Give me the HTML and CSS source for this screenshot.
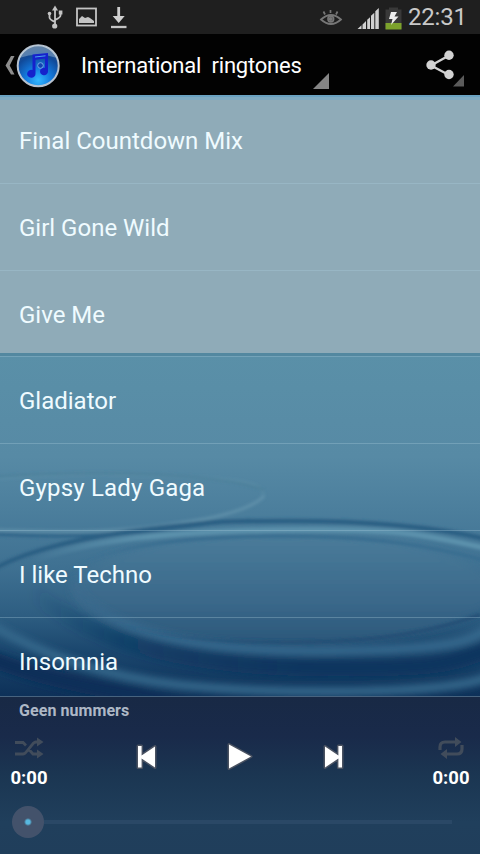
FILE: index.html
```html
<!DOCTYPE html>
<html lang="nl">
<head>
<meta charset="utf-8">
<title>International ringtones</title>
<link rel="stylesheet" href="styles.css">
</head>
<body>
<div class="phone">
  <header class="status">
    <svg class="status-left" width="90" height="34" viewBox="45 0 90 34" fill="none" stroke="#c4c4c4" stroke-width="1.8">
      <path d="M55 8v17M49.500 13v4.500q0 2 5.500 4.500M60.500 12v3.500q0 2-5.500 4.500"/>
      <path d="M52 10.500l3-5 3 5z" fill="#c4c4c4" stroke="none"/>
      <circle cx="49.500" cy="13.500" r="1.800" fill="#c4c4c4" stroke="none"/>
      <path d="M58.800 10.500h3.600v4h-3.600z" fill="#c4c4c4" stroke="none"/>
      <circle cx="54.700" cy="26" r="2.600" fill="#c4c4c4" stroke="none"/>
      <rect x="77" y="8.500" width="19" height="17"/>
      <path d="M79 23v-4l3-3 3 2 3-1 2 1 4 3v2z" fill="#c4c4c4" stroke="none"/>
      <path d="M117.300 7h2.800v9h4.600l-6 7-6-7h4.600z" fill="#d0d0d0" stroke="none"/>
      <path d="M111 27h15.500" stroke-width="2.300"/>
    </svg>
    <svg class="status-right" width="88" height="34" viewBox="317 0 88 34">
      <g fill="none" stroke="#777" stroke-width="1.700">
        <path d="M321 19.500q10-9 20 0q-10 9-20 0zM330.500 13v-3M325 14.500l-1.500-3M336 14.500l1.500-3"/>
        <circle cx="330.800" cy="19" r="2.800"/>
        <circle cx="330.800" cy="19" r="1.200" fill="#858585"/>
      </g>
      <g fill="#d0d0d0">
        <path d="M357.500 29l4-3.700V29zM362.500 29v-4.600l3.500-3.400v8zM367.200 29v-9.200l2.800-2.600V29zM371 29V15.800l3.300-3.100V29zM375.300 29V11.200l3.500-3.200v21z"/>
      </g>
      <path d="M385.500 9.500h3.500V7.500h9v2h3.500V29h-16z" fill="#393939"/>
      <path d="M385.500 23h16v6.500h-16z" fill="#7ca22c"/>
      <path d="M391 12h6l-2.500 4.500h4L391 25l1.500-6H389z" fill="#eee"/>
    </svg>
    <span class="clock">22:31</span>
  </header>
  <div class="bar">
    <svg class="logo" width="64" height="50" viewBox="0 40 64 50">
      <defs><radialGradient id="orb" cx=".5" cy=".85" r=".85"><stop offset="0" stop-color="#33b8ff"/><stop offset=".35" stop-color="#147ce0"/><stop offset=".72" stop-color="#104a9a"/><stop offset="1" stop-color="#30527c"/></radialGradient></defs>
      <path d="M14.500 56H11L5.500 65.500l5.500 9h3.500L9.700 65.500z" fill="#8d8d8d"/>
      <circle cx="38.200" cy="65.800" r="20.500" fill="url(#orb)" stroke="#b7c2cf" stroke-width="2"/>
      <path d="M19 58a20.500 20.500 0 0 1 38 0q-19-7-38 0z" fill="#c2dbe9" opacity=".36"/>
      <path d="M32.500 54.500l15.500-1.500v18.500a4 3.800 0 1 1-3-3.700V58.500l-9.500 1.200v13.800a4.200 4 0 1 1-3-3.500z" fill="#1522cc"/>
      <path d="M35 57l10.500-1.200" stroke="#49a4f1" stroke-width="1"/>
      <circle cx="40.500" cy="65.500" r="2.800" fill="#1445b1" stroke="#75a9ea" stroke-width="1"/>
    </svg>
    <div class="title">International&nbsp; ringtones</div>
    <svg class="corner" width="16" height="16" viewBox="0 0 16 16"><path d="M16 0v16H0z" fill="#858585"/></svg>
    <svg class="share" width="42" height="40" viewBox="424 48 42 40">
      <path d="M449 55.500L431 65.500l18 9.500" fill="none" stroke="#d2d2d2" stroke-width="2.300"/>
      <g fill="#d2d2d2"><circle cx="449" cy="55.300" r="4.700"/><circle cx="431" cy="65" r="4.700"/><circle cx="449" cy="74.500" r="4.700"/></g>
      <path d="M464 75v11.500h-11z" fill="#5b5b5b"/>
    </svg>
  </div>
  <main class="list">
    <svg class="water" width="480" height="602" viewBox="0 95 480 602" preserveAspectRatio="none">
      <defs>
        <linearGradient id="sea" x1="0" y1="353" x2="0" y2="697" gradientUnits="userSpaceOnUse">
          <stop offset="0" stop-color="#5a90a8"/><stop offset=".3" stop-color="#578aa5"/><stop offset=".45" stop-color="#4c7f9d"/><stop offset=".62" stop-color="#3f7192"/><stop offset=".76" stop-color="#2e5e82"/><stop offset=".87" stop-color="#1a466d"/><stop offset="1" stop-color="#0d3058"/>
        </linearGradient>
        <linearGradient id="disc" x1="0" y1="530" x2="0" y2="650" gradientUnits="userSpaceOnUse">
          <stop offset="0" stop-color="#4b7d9b"/><stop offset=".6" stop-color="#3a688a"/><stop offset="1" stop-color="#285477"/>
        </linearGradient>
        <linearGradient id="crest" x1="30" y1="0" x2="150" y2="0" gradientUnits="userSpaceOnUse">
          <stop offset="0" stop-color="#5c91ac" stop-opacity="0"/><stop offset="1" stop-color="#5c91ac"/>
        </linearGradient>
        <linearGradient id="trough" x1="70" y1="0" x2="170" y2="0" gradientUnits="userSpaceOnUse">
          <stop offset="0" stop-color="#386d90" stop-opacity="0"/><stop offset="1" stop-color="#386d90"/>
        </linearGradient>
        <linearGradient id="shade" x1="110" y1="0" x2="300" y2="0" gradientUnits="userSpaceOnUse">
          <stop offset="0" stop-color="#214d74" stop-opacity="0"/><stop offset="1" stop-color="#214d74"/>
        </linearGradient>
        <linearGradient id="deep" x1="30" y1="0" x2="300" y2="0" gradientUnits="userSpaceOnUse">
          <stop offset="0" stop-color="#0c355f" stop-opacity="0"/><stop offset=".35" stop-color="#0c355f" stop-opacity=".5"/><stop offset="1" stop-color="#0c355f"/>
        </linearGradient>
        <linearGradient id="inner" x1="65" y1="0" x2="130" y2="0" gradientUnits="userSpaceOnUse">
          <stop offset="0" stop-color="#396b8f" stop-opacity=".2"/><stop offset="1" stop-color="#396b8f"/>
        </linearGradient>
        <filter id="b1" x="-10%" y="-20%" width="120%" height="140%"><feGaussianBlur stdDeviation="1.500"/></filter>
        <filter id="b4" x="-10%" y="-30%" width="120%" height="160%"><feGaussianBlur stdDeviation="3.500"/></filter>
      </defs>
      <rect y="95" width="480" height="602" fill="url(#sea)"/>
      <ellipse cx="282" cy="590" rx="211" ry="57" fill="url(#disc)" filter="url(#b4)"/>
      <g fill="none" filter="url(#b4)">
        <path d="M30 590C90 642 190 667 320 668S450 662 490 650" stroke="url(#deep)" stroke-width="17"/>
        <path d="M-10 624C40 654 100 676 180 685S450 696 490 676" stroke="#34678b" stroke-width="9"/>
        <path d="M-10 658C30 675 80 686 190 705" stroke="#0c2e58" stroke-width="16"/>
        <path d="M74 578C78 612 150 651 310 651S470 638 490 628" stroke="url(#inner)" stroke-width="8"/>
      </g>
      <path d="M110 622C180 642 240 643 310 642S430 632 480 615" fill="none" stroke="url(#shade)" stroke-width="3" filter="url(#b1)"/>
      <g fill="none" filter="url(#b1)">
        <path d="M264 496C250 511 210 520 150 527S40 531-10 530" stroke="#6a9ab1" stroke-width="3" opacity=".6"/>
        <path d="M-10 480C50 473 120 474 190 477S262 487 264 496" stroke="#6a9bb0" stroke-width="2" opacity=".3"/>
        <path d="M-10 477C100 470 220 473 264 490" stroke="#41758f" stroke-width="2" opacity=".45"/>
        <path d="M-10 534C60 538 120 535 160 530S220 522 250 520" stroke="#2f6488" stroke-width="3"/>
        <path d="M-10 571C25 551 80 537 150 529S220 521 290 521S430 525 490 540" stroke="#2c5e83" stroke-width="4.500"/>
        <path d="M30 562C75 544 145 532 280 530S430 537 490 549" stroke="url(#crest)" stroke-width="5.500"/>
        <path d="M70 568C115 545 190 536 280 536S430 545 490 562" stroke="url(#trough)" stroke-width="3.500"/>
      </g>
      <rect y="95" width="480" height="258" fill="#8fabb8"/>
      <path d="M0 354.500H480" stroke="#5388a0" stroke-width="3"/>
      <path d="M0 97.500H480" stroke="#7fabc2" stroke-width="5"/>
      <path d="M0 96H480" stroke="#6aa2c1" stroke-width="2"/>
    </svg>
    <div class="row">Final Countdown Mix</div>
    <div class="row">Girl Gone Wild</div>
    <div class="row">Give Me</div>
    <div class="row">Gladiator</div>
    <div class="row wide">Gypsy Lady Gaga</div>
    <div class="row">I like Techno</div>
    <div class="row">Insomnia</div>
  </main>
  <footer class="player">
    <div class="now">Geen nummers</div>
    <div class="controls">
      <div class="side">
        <svg width="32" height="24" viewBox="13 737 32 24"><path d="M15 742.500h8l3 3M29 749.500l4 4.500h6M15 754h8q2 0 4-3l5-6q2-3 4-3h3" fill="none" stroke="#414c5b" stroke-width="2.800"/><path d="M37 737.500l6.500 4.500-6.500 4.500zM37 749.500l6.500 4.500-6.500 4.500z" fill="#414c5b"/></svg>
        <span>0:00</span>
      </div>
      <svg class="transport" width="220" height="40" viewBox="130 737 220 40">
        <g fill="#fff" stroke="#4a5261" stroke-width="3" paint-order="stroke" stroke-linejoin="round">
          <path d="M138 746h3.600v9.500l13.400-9v21l-13.400-9v9H138zM229 744.500l22 12-22 12zM325 746.500l13.400 9V746h3.600v21.500h-3.600v-9l-13.400 9z"/>
        </g>
      </svg>
      <div class="side">
        <svg width="32" height="24" viewBox="435 737 32 24"><path d="M440 750v-3q0-5 5-5h11M462 745v4q0 5-5 5h-11" fill="none" stroke="#414c5b" stroke-width="3.200"/><path d="M455 737l6.500 5-6.500 5zM447 749l-6.500 5 6.500 5z" fill="#414c5b"/></svg>
        <span>0:00</span>
      </div>
    </div>
    <div class="seek"><div class="thumb"></div><div class="track"></div></div>
  </footer>
</div>
</body>
</html>
```
FILE: styles.css
```css
* { box-sizing: border-box; }
body { margin: 0; font-family: Roboto, sans-serif; color: #fff; background: #000; }
svg { display: block; flex: none; }
.phone { width: 480px; height: 854px; display: flex; flex-direction: column; overflow: hidden; }
.status { height: 34px; background: #1f1f1f; display: flex; align-items: center; padding: 0 13px 0 45px; }
.status-right { margin-left: auto; }
.clock { width: 62px; padding-left: 3px; font-size: 24px; letter-spacing: -.2px; line-height: 34px; color: #c9c9c9; white-space: nowrap; }
.bar { height: 61px; background: #020202; display: flex; align-items: center; }
.title { margin-left: 17px; width: 232px; font-size: 22px; letter-spacing: -.23px; line-height: 30px; white-space: nowrap; padding-top: 3px; }
.corner { align-self: flex-end; margin-bottom: 6px; }
.share { margin-left: auto; margin-right: 14px; margin-top: 7px; }
.list { height: 602px; position: relative; overflow: hidden; padding-top: 2px; border-bottom: 1px solid #47637f; }
.water { position: absolute; left: 0; top: 0; }
.row { position: relative; height: 86.8px; padding: 2px 19px 0; line-height: 85px; font-size: 24px; color: #effbff; border-bottom: 1px solid rgba(170, 205, 220, .32); white-space: nowrap; }
.wide { letter-spacing: .18px; }
.player { flex: 1; background: linear-gradient(#182945, #192a4a 25%, #1b3652 50%, #203f5c 80%, #203e5b); }
.now { padding: 3px 19px 0; height: 40px; font-size: 16px; letter-spacing: .07px; font-weight: 700; line-height: 22px; color: #aeb8c6; }
.controls { height: 60px; display: flex; justify-content: space-between; padding: 0 8px; }
.side { width: 42px; display: flex; flex-direction: column; align-items: center; font-size: 18.5px; font-weight: 700; line-height: 35px; }
.seek { height: 50px; display: flex; align-items: center; padding: 0 28px 0 12px; }
.thumb { width: 32px; height: 32px; border-radius: 50%; background: radial-gradient(circle, #58b8df 0 2px, #43526b 4px); }
.track { flex: 1; height: 4px; background: #2a4866; }
```
